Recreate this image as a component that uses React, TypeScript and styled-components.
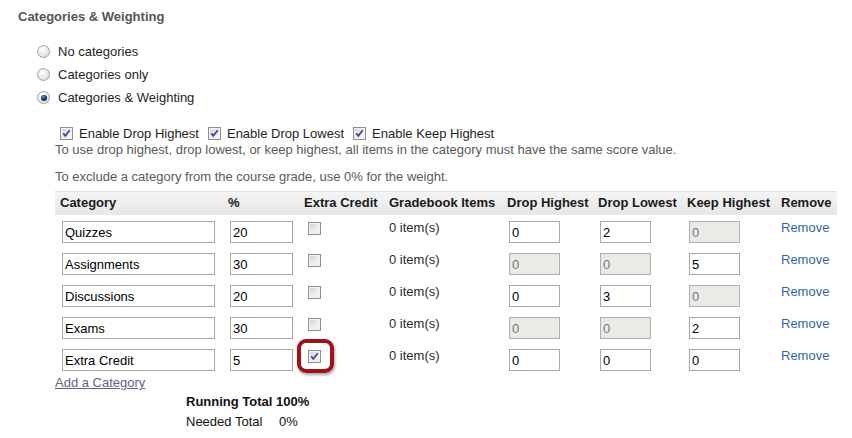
import React from "react";
import styled, { createGlobalStyle } from "styled-components";

const GlobalStyle = createGlobalStyle`
  html, body { margin: 0; padding: 0; background: #ffffff; }
  body {
    font-family: "Liberation Sans", Arial, sans-serif;
    font-size: 13px;
    color: #222;
  }
`;

const Page = styled.div`
  width: 852px;
  height: 438px;
  padding-top: 9px;
  box-sizing: border-box;
  overflow: hidden;
`;

const Title = styled.h2`
  margin: 0 0 0 18px;
  font-size: 13px;
  line-height: 15px;
  font-weight: bold;
  color: #555555;
`;

const RadioList = styled.div`
  margin-top: 16px;
  display: flex;
  flex-direction: column;
`;

const RadioRow = styled.label`
  display: flex;
  align-items: center;
  height: 23px;
  padding-left: 37px;
  line-height: 15px;
  color: #1e1e1e;
`;

const RadioDot = styled.span<{ $on?: boolean }>`
  position: relative;
  width: 13px;
  height: 13px;
  box-sizing: border-box;
  border-radius: 50%;
  border: 1px solid #a2a2a2;
  background: radial-gradient(circle at 40% 35%, #ffffff 0%, #ececec 45%, #cfcfcf 100%);
  margin-right: 8px;
  flex: none;
  &::after {
    content: "";
    display: ${(p) => (p.$on ? "block" : "none")};
    position: absolute;
    left: 2.5px;
    top: 2.5px;
    width: 6px;
    height: 6px;
    border-radius: 50%;
    background: radial-gradient(circle at 40% 35%, #5fa0e8 0%, #173e80 40%, #07122e 100%);
  }
`;

const OptionRow = styled.div`
  margin-top: 15px;
  height: 18px;
  padding-left: 60px;
  display: flex;
  align-items: center;
  line-height: 15px;
  color: #1e1e1e;
`;

const OptionItem = styled.label`
  display: flex;
  align-items: center;
  margin-right: 9px;
`;

const Box = styled.span<{ $mt?: number }>`
  position: relative;
  display: inline-block;
  width: 13px;
  height: 13px;
  box-sizing: border-box;
  border: 1px solid #8e8f8f;
  background: linear-gradient(135deg, #d3d3d3 0%, #ececec 55%, #fbfbfb 100%);
  box-shadow: inset 0 0 0 1px #f4f4f4;
  flex: none;
  margin-top: ${(p) => p.$mt ?? 0}px;
  svg { position: absolute; left: 0; top: 0; }
`;

const OptionBox = styled(Box)`
  margin-right: 6px;
`;

const Help = styled.p<{ $mt: number }>`
  margin: ${(p) => p.$mt}px 0 0 55px;
  line-height: 15px;
  color: #5a5a5a;
`;

const Table = styled.div`
  margin: 7px 0 0 55px;
  width: 782px;
`;

const cols = "168px 76px 85px 118px 91px 89px 94px 61px";

const HeadRow = styled.div`
  display: grid;
  grid-template-columns: ${cols};
  height: 24px;
  box-sizing: border-box;
  border-top: 1px solid #e0e0e0;
  background: linear-gradient(#f4f4f4, #e7e7e7);
`;

const HeadCell = styled.div`
  padding: 3px 0 0 5px;
  font-weight: bold;
  line-height: 15px;
  color: #1a1a1a;
  white-space: nowrap;
`;

const BodyRow = styled.div`
  display: grid;
  grid-template-columns: ${cols};
  height: 32px;
`;

const Cell = styled.div`
  padding: 5px 0 0 5px;
  line-height: 15px;
  color: #2a2a2a;
  white-space: nowrap;
`;

const InputCell = styled.div`
  padding: 6px 0 0 7px;
`;

const TextInput = styled.input<{ $w: number }>`
  width: ${(p) => p.$w}px;
  height: 22px;
  box-sizing: border-box;
  border: 1px solid #a9a9a9;
  padding: 0 2px;
  margin: 0;
  font-family: "Liberation Sans", Arial, sans-serif;
  font-size: 13px;
  color: #000;
  background: #fff;
  outline: none;
  &:disabled {
    background: #ebeae4;
    color: #7a7090;
    border-color: #b0b0b0;
  }
`;

const BoxCell = styled.div`
  padding: 5px 0 0 9px;
`;

const Highlight = styled.span`
  position: absolute;
  left: -12px;
  top: -12px;
  width: 37px;
  height: 34px;
  box-sizing: border-box;
  border: 4px solid #a3101a;
  border-radius: 9px;
  box-shadow: 1px 2px 3px rgba(0, 0, 0, 0.35);
  pointer-events: none;
`;

const RemoveLink = styled.a`
  color: #3566a3;
  text-decoration: none;
  cursor: pointer;
`;

const AddLink = styled.a`
  display: block;
  margin-left: 55px;
  line-height: 15px;
  color: #5b6680;
  text-decoration: underline;
  cursor: pointer;
`;

const Totals = styled.div`
  margin: 4px 0 0 186px;
  line-height: 15px;
  color: #111;
`;

const TotalLine = styled.div<{ $bold?: boolean; $mt?: number }>`
  display: flex;
  font-weight: ${(p) => (p.$bold ? "bold" : "normal")};
  margin-top: ${(p) => p.$mt ?? 0}px;
`;

const TotalLabel = styled.span`
  width: 93px;
`;

const Check = () => (
  <svg width="11" height="11" viewBox="0 0 11 11">
    <path d="M2.3 5.4 L4.3 7.8 L8.7 2.3" fill="none" stroke="#3d3fa6" strokeWidth="1.7" />
  </svg>
);

type Row = {
  name: string;
  pct: string;
  extra: boolean;
  dh: string;
  dl: string;
  kh: string;
  dhOff?: boolean;
  dlOff?: boolean;
  khOff?: boolean;
};

const rows: Row[] = [
  { name: "Quizzes", pct: "20", extra: false, dh: "0", dl: "2", kh: "0", khOff: true },
  { name: "Assignments", pct: "30", extra: false, dh: "0", dl: "0", kh: "5", dhOff: true, dlOff: true },
  { name: "Discussions", pct: "20", extra: false, dh: "0", dl: "3", kh: "0", khOff: true },
  { name: "Exams", pct: "30", extra: false, dh: "0", dl: "0", kh: "2", dhOff: true, dlOff: true },
  { name: "Extra Credit", pct: "5", extra: true, dh: "0", dl: "0", kh: "0" },
];

const headers = [
  "Category",
  "%",
  "Extra Credit",
  "Gradebook Items",
  "Drop Highest",
  "Drop Lowest",
  "Keep Highest",
  "Remove",
];

export default function App() {
  return (
    <>
      <GlobalStyle />
      <Page>
        <Title>Categories &amp; Weighting</Title>
        <RadioList>
          <RadioRow>
            <RadioDot />
            No categories
          </RadioRow>
          <RadioRow>
            <RadioDot />
            Categories only
          </RadioRow>
          <RadioRow>
            <RadioDot $on />
            Categories &amp; Weighting
          </RadioRow>
        </RadioList>
        <OptionRow>
          <OptionItem>
            <OptionBox>
              <Check />
            </OptionBox>
            Enable Drop Highest
          </OptionItem>
          <OptionItem>
            <OptionBox>
              <Check />
            </OptionBox>
            Enable Drop Lowest
          </OptionItem>
          <OptionItem>
            <OptionBox>
              <Check />
            </OptionBox>
            Enable Keep Highest
          </OptionItem>
        </OptionRow>
        <Help $mt={0}>
          To use drop highest, drop lowest, or keep highest, all items in the category must have the same score value.
        </Help>
        <Help $mt={12}>To exclude a category from the course grade, use 0% for the weight.</Help>
        <Table>
          <HeadRow>
            {headers.map((h) => (
              <HeadCell key={h}>{h}</HeadCell>
            ))}
          </HeadRow>
          {rows.map((r) => (
            <BodyRow key={r.name}>
              <InputCell>
                <TextInput $w={153} defaultValue={r.name} />
              </InputCell>
              <InputCell>
                <TextInput $w={63} defaultValue={r.pct} />
              </InputCell>
              <BoxCell>
                <Box $mt={2}>
                  {r.extra && <Check />}
                  {r.extra && <Highlight />}
                </Box>
              </BoxCell>
              <Cell>0 item(s)</Cell>
              <InputCell>
                <TextInput $w={51} defaultValue={r.dh} disabled={r.dhOff} />
              </InputCell>
              <InputCell>
                <TextInput $w={51} defaultValue={r.dl} disabled={r.dlOff} />
              </InputCell>
              <InputCell>
                <TextInput $w={51} defaultValue={r.kh} disabled={r.khOff} />
              </InputCell>
              <Cell>
                <RemoveLink>Remove</RemoveLink>
              </Cell>
            </BodyRow>
          ))}
        </Table>
        <AddLink>Add a Category</AddLink>
        <Totals>
          <TotalLine $bold>Running Total 100%</TotalLine>
          <TotalLine $mt={5}>
            <TotalLabel>Needed Total</TotalLabel>
            <span>0%</span>
          </TotalLine>
        </Totals>
      </Page>
    </>
  );
}
